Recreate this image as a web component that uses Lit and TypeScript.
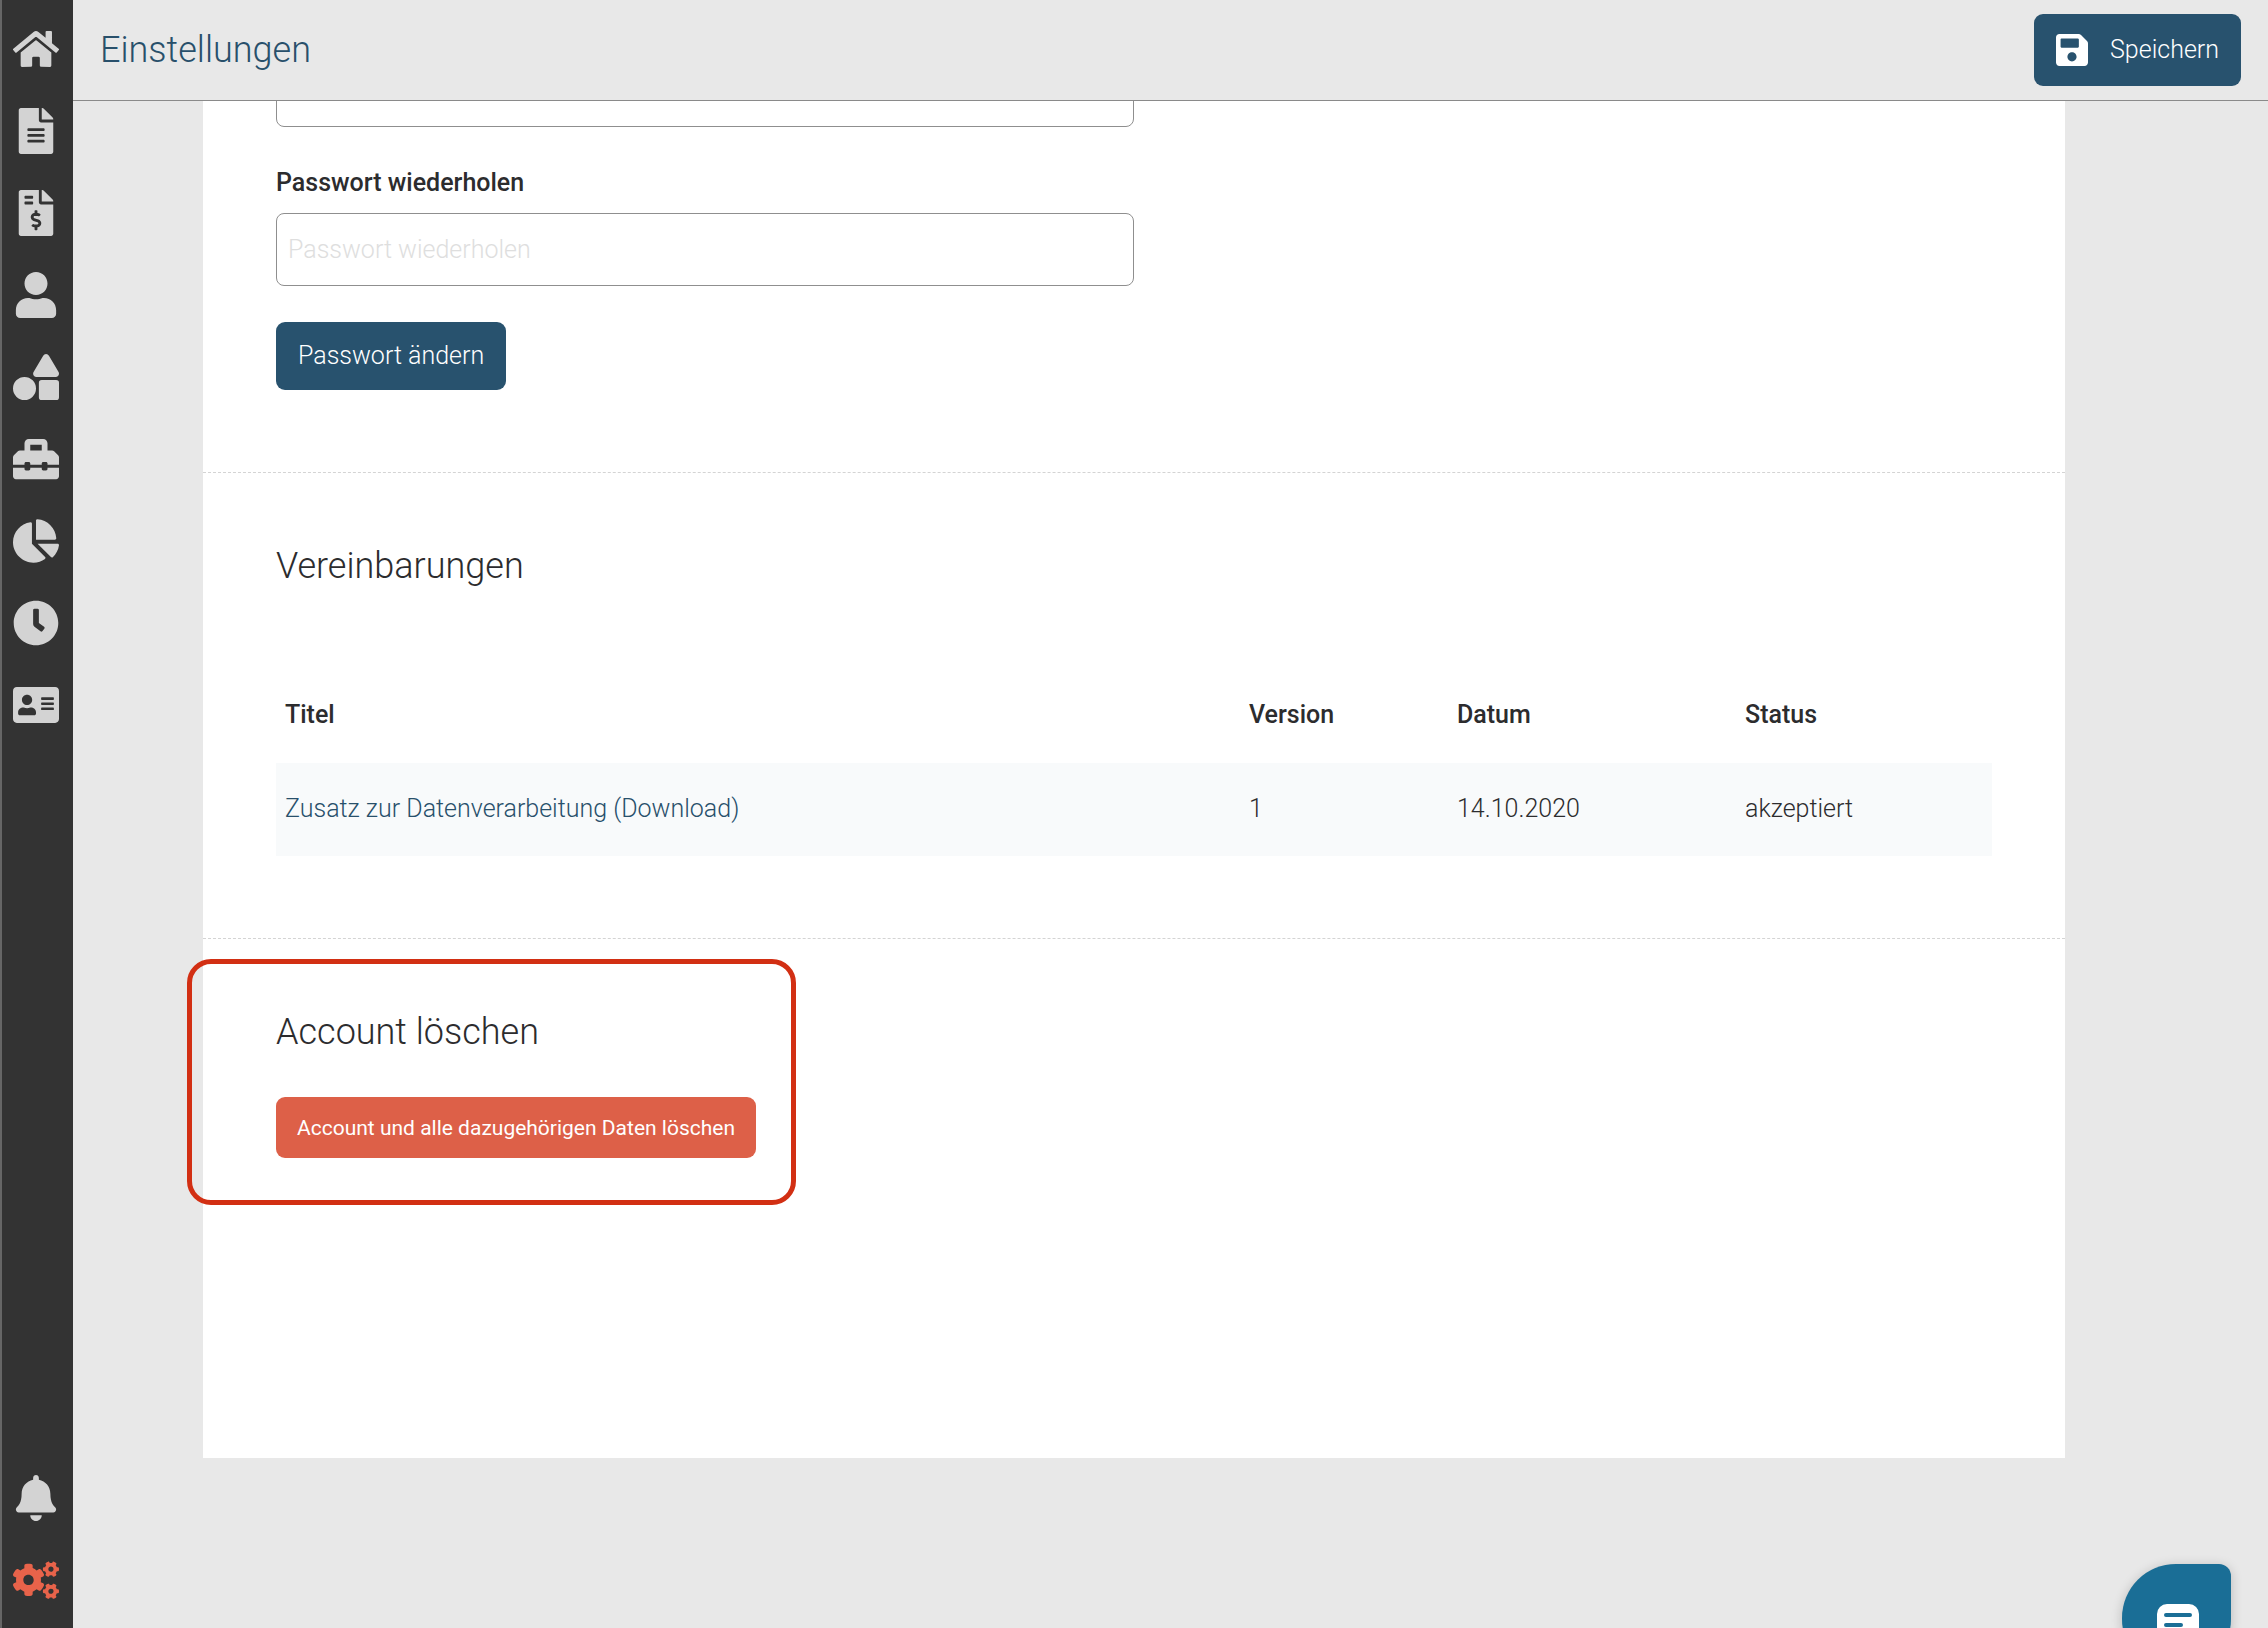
import { LitElement, html, css, svg } from "lit";
import { customElement, property } from "lit/decorators.js";
import { classMap } from "lit/directives/class-map.js";

interface IconShape {
  box: string;
  paths: string[];
}

const smallGear =
  "M512.1 191l-8.2 14.3c-3 5.3-9.4 7.5-15.1 5.4-11.8-4.4-22.6-10.7-32.1-18.6-4.6-3.8-5.8-10.5-2.8-15.7l8.2-14.3c-6.9-8-12.3-17.3-15.9-27.4h-16.5c-6 0-11.2-4.3-12.2-10.3-2-12-2.1-24.6 0-37.1 1-6 6.2-10.4 12.2-10.4h16.5c3.6-10.1 9-19.4 15.9-27.4l-8.2-14.3c-3-5.2-1.9-11.9 2.8-15.7 9.5-7.9 20.4-14.2 32.1-18.6 5.7-2.1 12.1.1 15.1 5.4l8.2 14.3c10.5-1.9 21.2-1.9 31.7 0L552 6.3c3-5.3 9.4-7.5 15.1-5.4 11.8 4.4 22.6 10.7 32.1 18.6 4.6 3.8 5.8 10.5 2.8 15.7l-8.2 14.3c6.9 8 12.3 17.3 15.9 27.4h16.5c6 0 11.2 4.3 12.2 10.3 2 12 2.1 24.6 0 37.1-1 6-6.2 10.4-12.2 10.4h-16.5c-3.6 10.1-9 19.4-15.9 27.4l8.2 14.3c3 5.2 1.9 11.9-2.8 15.7-9.5 7.9-20.4 14.2-32.1 18.6-5.7 2.1-12.1-.1-15.1-5.4l-8.2-14.3c-10.4 1.9-21.2 1.9-31.7 0zm-10.5-58.8c38.5 29.6 82.4-14.3 52.8-52.8-38.5-29.7-82.4 14.3-52.8 52.8z";

const icons: Record<string, IconShape> = {
  home: {
    box: "0 0 576 512",
    paths: [
      "M280.37 148.26L96 300.11V464a16 16 0 0 0 16 16l112.06-.29a16 16 0 0 0 15.92-16V368a16 16 0 0 1 16-16h64a16 16 0 0 1 16 16v95.64a16 16 0 0 0 16 16.05L464 480a16 16 0 0 0 16-16V300L295.67 148.26a12.19 12.19 0 0 0-15.3 0zM571.6 251.47L488 182.56V44.05a12 12 0 0 0-12-12h-56a12 12 0 0 0-12 12v72.61L318.47 43a48 48 0 0 0-61 0L4.34 251.47a12 12 0 0 0-1.6 16.9l25.5 31A12 12 0 0 0 45.15 301l235.22-193.74a12.19 12.19 0 0 1 15.3 0L530.9 301a12 12 0 0 0 16.9-1.6l25.5-31a12 12 0 0 0-1.7-16.93z",
    ],
  },
  file: {
    box: "0 0 384 512",
    paths: [
      "M224 136V0H24C10.7 0 0 10.7 0 24v464c0 13.3 10.7 24 24 24h336c13.3 0 24-10.7 24-24V160H248c-13.2 0-24-10.8-24-24zm64 236c0 6.6-5.4 12-12 12H108c-6.6 0-12-5.4-12-12v-8c0-6.6 5.4-12 12-12h168c6.6 0 12 5.4 12 12v8zm0-64c0 6.6-5.4 12-12 12H108c-6.6 0-12-5.4-12-12v-8c0-6.6 5.4-12 12-12h168c6.6 0 12 5.4 12 12v8zm0-72v8c0 6.6-5.4 12-12 12H108c-6.6 0-12-5.4-12-12v-8c0-6.6 5.4-12 12-12h168c6.6 0 12 5.4 12 12zm96-114.1v6.1H256V0h6.1c6.4 0 12.5 2.5 17 7l97.9 98c4.5 4.5 7 10.6 7 16.9z",
    ],
  },
  invoice: {
    box: "0 0 384 512",
    paths: [
      "M377 105L279.1 7c-4.5-4.5-10.6-7-17-7H256v128h128v-6.1c0-6.3-2.5-12.4-7-16.9zm-153 31V0H24C10.7 0 0 10.7 0 24v464c0 13.3 10.7 24 24 24h336c13.3 0 24-10.7 24-24V160H248c-13.2 0-24-10.8-24-24zM64 72c0-4.42 3.58-8 8-8h80c4.42 0 8 3.58 8 8v16c0 4.42-3.58 8-8 8H72c-4.42 0-8-3.58-8-8V72zm0 80v-16c0-4.42 3.58-8 8-8h80c4.42 0 8 3.58 8 8v16c0 4.42-3.58 8-8 8H72c-4.42 0-8-3.58-8-8zm144 263.88V440c0 4.42-3.58 8-8 8h-16c-4.42 0-8-3.58-8-8v-24.29c-11.29-.58-22.27-4.52-31.37-11.35-3.9-2.93-4.1-8.77-.57-12.14l11.75-11.21c2.77-2.64 6.89-2.76 10.13-.73 3.87 2.42 8.26 3.72 12.82 3.72h28.11c6.5 0 11.8-5.92 11.8-13.19 0-5.95-3.61-11.19-8.77-12.73l-45-13.5c-18.59-5.58-31.58-23.42-31.58-43.39 0-24.52 19.05-44.44 42.67-45.07V232c0-4.42 3.58-8 8-8h16c4.42 0 8 3.58 8 8v24.29c11.29.58 22.27 4.51 31.37 11.35 3.9 2.93 4.1 8.77.57 12.14l-11.75 11.21c-2.77 2.64-6.89 2.76-10.13.73-3.87-2.43-8.26-3.72-12.82-3.72h-28.11c-6.5 0-11.8 5.92-11.8 13.19 0 5.95 3.61 11.19 8.77 12.73l45 13.5c18.59 5.58 31.58 23.42 31.58 43.39 0 24.53-19.05 44.44-42.67 45.07z",
    ],
  },
  user: {
    box: "0 0 448 512",
    paths: [
      "M224 256c70.7 0 128-57.3 128-128S294.7 0 224 0 96 57.3 96 128s57.3 128 128 128zm89.6 32h-16.7c-22.2 10.2-46.9 16-72.9 16s-50.6-5.8-72.9-16h-16.7C60.2 288 0 348.2 0 422.4V464c0 26.5 21.5 48 48 48h352c26.5 0 48-21.5 48-48v-41.6c0-74.2-60.2-134.4-134.4-134.4z",
    ],
  },
  shapes: {
    box: "0 0 512 512",
    paths: [
      "M128,256A128,128,0,1,0,256,384,128,128,0,0,0,128,256Zm379-54.86L400.07,18.29a37.26,37.26,0,0,0-64.14,0L229,201.14C214.76,225.52,232.58,256,261.09,256H474.91C503.42,256,521.24,225.52,507,201.14ZM480,288H320a32,32,0,0,0-32,32V480a32,32,0,0,0,32,32H480a32,32,0,0,0,32-32V320A32,32,0,0,0,480,288Z",
    ],
  },
  toolbox: {
    box: "0 0 512 512",
    paths: [
      "M502.63 214.63l-45.25-45.25c-6-6-14.14-9.37-22.63-9.37H384V80c0-26.51-21.49-48-48-48H176c-26.51 0-48 21.49-48 48v80H77.25c-8.49 0-16.62 3.37-22.63 9.37L9.37 214.63c-6 6-9.37 14.14-9.37 22.63V320h128v-16c0-8.84 7.16-16 16-16h32c8.84 0 16 7.16 16 16v16h128v-16c0-8.84 7.16-16 16-16h32c8.84 0 16 7.16 16 16v16h128v-82.75c0-8.48-3.37-16.62-9.37-22.62zM320 160H192V96h128v64zm64 208c0 8.84-7.16 16-16 16h-32c-8.84 0-16-7.16-16-16v-16H192v16c0 8.84-7.16 16-16 16h-32c-8.84 0-16-7.16-16-16v-16H0v96c0 17.67 14.33 32 32 32h448c17.67 0 32-14.33 32-32v-96H384v16z",
    ],
  },
  pie: {
    box: "0 0 544 512",
    paths: [
      "M527.79 288H290.5l158.03 158.03c6.04 6.04 15.98 6.53 22.19.68 38.7-36.46 65.32-85.61 73.13-140.86 1.34-9.46-6.51-17.85-16.06-17.85zm-15.83-64.8C503.72 103.74 408.26 8.28 288.8.04 279.68-.59 272 7.1 272 16.24V240h223.77c9.14 0 16.82-7.68 16.19-16.8zM224 288V50.71c0-9.55-8.39-17.4-17.84-16.06C86.99 51.49-4.1 155.6.14 280.37 4.5 408.51 114.83 513.59 243.03 511.98c50.4-.63 96.97-16.87 135.26-44.03 7.9-5.6 8.42-17.23 1.57-24.08L224 288z",
    ],
  },
  clock: {
    box: "0 0 512 512",
    paths: [
      "M256,8C119,8,8,119,8,256S119,504,256,504,504,393,504,256,393,8,256,8Zm92.49,313h0l-20,25a16,16,0,0,1-22.49,2.5h0l-67-49.72a40,40,0,0,1-15-31.23V112a16,16,0,0,1,16-16h32a16,16,0,0,1,16,16V256l58,42.5A16,16,0,0,1,348.49,321Z",
    ],
  },
  card: {
    box: "0 0 576 512",
    paths: [
      "M528 32H48C21.5 32 0 53.5 0 80v352c0 26.5 21.5 48 48 48h480c26.5 0 48-21.5 48-48V80c0-26.5-21.5-48-48-48zm-352 96c35.3 0 64 28.7 64 64s-28.7 64-64 64-64-28.7-64-64 28.7-64 64-64zm112 236.8c0 10.6-10 19.2-22.4 19.2H86.4C74 384 64 375.4 64 364.8v-19.2c0-31.8 30.1-57.6 67.2-57.6h5c12.3 5.1 25.7 8 39.8 8s27.6-2.9 39.8-8h5c37.1 0 67.2 25.8 67.2 57.6v19.2zM512 312c0 4.4-3.6 8-8 8H360c-4.4 0-8-3.6-8-8v-16c0-4.4 3.6-8 8-8h144c4.4 0 8 3.6 8 8v16zm0-64c0 4.4-3.6 8-8 8H360c-4.4 0-8-3.6-8-8v-16c0-4.4 3.6-8 8-8h144c4.4 0 8 3.6 8 8v16zm0-64c0 4.4-3.6 8-8 8H360c-4.4 0-8-3.6-8-8v-16c0-4.4 3.6-8 8-8h144c4.4 0 8 3.6 8 8v16z",
    ],
  },
  bell: {
    box: "0 0 448 512",
    paths: [
      "M224 512c35.32 0 63.97-28.65 63.97-64H160.03c0 35.35 28.65 64 63.97 64zm215.39-149.71c-19.32-20.76-55.47-51.99-55.47-154.29 0-77.7-54.48-139.9-127.94-155.16V32c0-17.67-14.32-32-31.98-32s-31.98 14.33-31.98 32v20.84C118.56 68.1 64.08 130.3 64.08 208c0 102.3-36.15 133.53-55.47 154.29-6 6.45-8.66 14.16-8.61 21.71.11 16.4 12.98 32 32.1 32h383.8c19.12 0 32-15.6 32.1-32 .05-7.55-2.61-15.27-8.61-21.71z",
    ],
  },
  cogs: {
    box: "0 0 640 512",
    paths: [
      smallGear,
      "M386.3 286.1l33.7 16.8c10.1 5.8 14.5 18.1 10.5 29.1-8.9 24.2-26.4 46.4-42.6 65.8-7.4 8.9-20.2 11.1-30.3 5.3l-29.1-16.8c-16 13.7-34.6 24.6-54.9 31.7v33.6c0 11.6-8.3 21.6-19.7 23.6-24.6 4.2-50.4 4.4-75.9 0-11.5-2-20-11.9-20-23.6V418c-20.3-7.2-38.9-18-54.9-31.7L74 403c-10 5.8-22.9 3.6-30.3-5.3-16.2-19.4-33.3-41.6-42.2-65.7-4-10.9.4-23.2 10.5-29.1l33.3-16.8c-3.9-20.9-3.9-42.4 0-63.4L12 205.8c-10.1-5.8-14.6-18.1-10.5-29 8.9-24.2 26-46.4 42.2-65.8 7.4-8.9 20.2-11.1 30.3-5.3l29.1 16.8c16-13.7 34.6-24.6 54.9-31.7V57.1c0-11.5 8.2-21.5 19.6-23.5 24.6-4.2 50.5-4.4 76-.1 11.5 2 20 11.9 20 23.6v33.6c20.3 7.2 38.9 18 54.9 31.7l29.1-16.8c10-5.8 22.9-3.6 30.3 5.3 16.2 19.4 33.2 41.6 42.1 65.8 4 10.9.1 23.2-10 29.1l-33.7 16.8c3.9 21 3.9 42.5 0 63.5zm-117.6 21.1c59.2-77-28.7-164.9-105.7-105.7-59.2 77 28.7 164.9 105.7 105.7z",
      // The lower gear repeats the upper one; its absolute points move down with it.
      smallGear.replace("M512.1 191l", "M512.1 498l").replace("L552 6.3", "L552 313.3"),
    ],
  },
  save: {
    box: "0 32 448 448",
    paths: [
      "M433.941 129.941l-83.882-83.882A48 48 0 0 0 316.118 32H48C21.49 32 0 53.49 0 80v352c0 26.51 21.49 48 48 48h352c26.51 0 48-21.49 48-48V163.882a48 48 0 0 0-14.059-33.941zM224 416c-35.346 0-64-28.654-64-64 0-35.346 28.654-64 64-64s64 28.654 64 64c0 35.346-28.654 64-64 64zm96-304.52V212c0 6.627-5.373 12-12 12H76c-6.627 0-12-5.373-12-12V108c0-6.627 5.373-12 12-12h228.52c3.183 0 6.235 1.264 8.485 3.515l3.48 3.48A11.996 11.996 0 0 1 320 111.48z",
    ],
  },
};

@customElement("app-icon")
export class AppIcon extends LitElement {
  static styles = css`
    :host {
      display: block;
    }
    svg {
      display: block;
      width: 100%;
      height: 100%;
      fill: currentColor;
    }
  `;

  @property() name = "home";

  render() {
    const icon = icons[this.name];
    return html`<svg viewBox=${icon.box} aria-hidden="true">
      ${icon.paths.map((d) => svg`<path d=${d}></path>`)}
    </svg>`;
  }
}

@customElement("app-sidebar")
export class AppSidebar extends LitElement {
  static styles = css`
    :host {
      display: block;
      box-sizing: border-box;
      background: #333;
      border-left: 2px solid #666;
    }
    nav {
      box-sizing: border-box;
      height: 100%;
      padding: 8px 4px 7px 0;
      display: flex;
      flex-direction: column;
      justify-content: space-between;
    }
    .link {
      height: 82px;
      display: flex;
      align-items: center;
      justify-content: center;
      color: #d3d3d3;
    }
    .active {
      color: #e8634a;
    }
    .icon {
      width: 46px;
      height: 46px;
    }
  `;

  private top = [
    ["home", "Start"],
    ["file", "Dokumente"],
    ["invoice", "Rechnungen"],
    ["user", "Kunden"],
    ["shapes", "Artikel"],
    ["toolbox", "Werkzeuge"],
    ["pie", "Auswertungen"],
    ["clock", "Zeiten"],
    ["card", "Kontakte"],
  ];
  private bottom = [
    ["bell", "Meldungen"],
    ["cogs", "Einstellungen"],
  ];

  private group(items: string[][]) {
    return html`<div>
      ${items.map(
        ([name, label]) => html`<a
          href="#${name}"
          aria-label=${label}
          class=${classMap({ link: true, active: name === "cogs" })}
          ><app-icon class="icon" name=${name}></app-icon
        ></a>`
      )}
    </div>`;
  }

  render() {
    return html`<nav>${this.group(this.top)}${this.group(this.bottom)}</nav>`;
  }
}

@customElement("app-root")
export class AppRoot extends LitElement {
  static styles = css`
    :host {
      display: flex;
      height: 100vh;
      overflow: hidden;
      position: relative;
      background: #e8e8e8;
      color: #2c2c2e;
      font-family: Roboto, "Liberation Sans", sans-serif;
      font-size: 25px;
      font-weight: 300;
      line-height: 30px;
    }
    app-sidebar {
      flex: 0 0 73px;
    }
    .page {
      flex: 1;
      min-width: 0;
      display: flex;
      flex-direction: column;
    }
    .bar {
      flex: none;
      height: 100px;
      padding: 0 27px;
      display: flex;
      align-items: center;
      justify-content: space-between;
      border-bottom: 1px solid #8a8a8a;
    }
    h1,
    h2 {
      margin: 0;
      font-size: 36px;
      font-weight: 300;
      line-height: 44px;
    }
    h1 {
      color: #28506b;
    }
    button {
      font: inherit;
      color: #fff;
      border: 0;
      border-radius: 9px;
      background: #28526e;
      cursor: pointer;
    }
    .save {
      height: 72px;
      padding: 0 22px;
      display: flex;
      align-items: center;
      gap: 22px;
    }
    .save-icon {
      width: 32px;
      height: 32px;
    }
    .scroller {
      flex: 1;
      min-height: 0;
      overflow: hidden;
      padding: 0 203px 0 130px;
    }
    .card {
      margin-top: -47px;
      padding-bottom: 218px;
      background: #fff;
    }
    .section {
      position: relative;
      padding: 71px 73px 82px;
      display: flex;
      flex-direction: column;
      align-items: flex-start;
    }
    .section + .section {
      border-top: 1px dashed #d4d4d4;
    }
    .passwords {
      padding-top: 0;
    }
    label {
      margin: 41px 0 15px;
      font-weight: 500;
    }
    input {
      box-sizing: border-box;
      width: 50%;
      height: 73px;
      padding: 0 11px;
      font: inherit;
      color: inherit;
      background: #fff;
      border: 1px solid #8f8f8f;
      border-radius: 8px;
    }
    input::placeholder {
      color: #dedede;
      opacity: 1;
    }
    .change {
      height: 68px;
      margin-top: 36px;
      padding: 0 22px;
    }
    table {
      width: 100%;
      margin-top: 82px;
      border-collapse: collapse;
      table-layout: fixed;
    }
    th,
    td {
      box-sizing: border-box;
      height: 93px;
      padding: 0 9px 2px;
      text-align: left;
    }
    th {
      padding-bottom: 4px;
      font-weight: 500;
    }
    td {
      background: #f8fafb;
    }
    td a {
      color: #28506b;
      text-decoration: none;
    }
    .col-version {
      width: 208px;
    }
    .col-date {
      width: 288px;
    }
    .col-status {
      width: 256px;
    }
    .delete {
      height: 61px;
      margin-top: 43px;
      padding: 0 21px;
      font-size: 21px;
      font-weight: 400;
      background: #dd6048;
    }
    .marker {
      position: absolute;
      box-sizing: border-box;
      left: -16px;
      top: 20px;
      width: 609px;
      height: 246px;
      border: 5px solid #d22f13;
      border-radius: 24px;
      pointer-events: none;
    }
    .chat {
      position: absolute;
      right: 37px;
      bottom: -45px;
      width: 109px;
      height: 109px;
      padding: 6px 0 0 2px;
      border-radius: 54px 12px 54px 54px;
      background: #1a6e96;
      box-shadow: 0 2px 12px rgba(0, 0, 0, 0.2);
    }
    .chat svg {
      display: block;
      margin: 6px auto 0;
    }
  `;

  private agreements = [
    {
      title: "Zusatz zur Datenverarbeitung (Download)",
      version: "1",
      date: "14.10.2020",
      status: "akzeptiert",
    },
  ];

  render() {
    return html`
      <app-sidebar></app-sidebar>
      <div class="page">
        <header class="bar">
          <h1>Einstellungen</h1>
          <button class="save" type="button">
            <app-icon class="save-icon" name="save"></app-icon>
            <span>Speichern</span>
          </button>
        </header>
        <main class="scroller">
          <div class="card">
            <form class="section passwords">
              <input type="password" aria-label="Passwort" autocomplete="new-password" />
              <label for="repeat">Passwort wiederholen</label>
              <input
                id="repeat"
                type="password"
                placeholder="Passwort wiederholen"
                autocomplete="new-password"
              />
              <button class="change" type="button">Passwort ändern</button>
            </form>
            <section class="section">
              <h2>Vereinbarungen</h2>
              <table>
                <colgroup>
                  <col />
                  <col class="col-version" />
                  <col class="col-date" />
                  <col class="col-status" />
                </colgroup>
                <thead>
                  <tr>
                    <th scope="col">Titel</th>
                    <th scope="col">Version</th>
                    <th scope="col">Datum</th>
                    <th scope="col">Status</th>
                  </tr>
                </thead>
                <tbody>
                  ${this.agreements.map(
                    (row) => html`<tr>
                      <td><a href="#download">${row.title}</a></td>
                      <td>${row.version}</td>
                      <td>${row.date}</td>
                      <td>${row.status}</td>
                    </tr>`
                  )}
                </tbody>
              </table>
            </section>
            <section class="section">
              <h2>Account löschen</h2>
              <button class="delete" type="button">
                Account und alle dazugehörigen Daten löschen
              </button>
              <div class="marker"></div>
            </section>
          </div>
        </main>
      </div>
      <button class="chat" type="button" aria-label="Chat">
        <svg width="42" height="42" viewBox="0 0 42 42" aria-hidden="true">
          <path
            fill="#fff"
            d="M10 0h22a10 10 0 0 1 10 10v31l-8-6H10A10 10 0 0 1 0 25V10A10 10 0 0 1 10 0z"
          ></path>
          <path
            fill="none"
            stroke="#1a6e96"
            stroke-width="4"
            stroke-linecap="round"
            d="M9 11h24M9 21h15"
          ></path>
        </svg>
      </button>
    `;
  }
}
